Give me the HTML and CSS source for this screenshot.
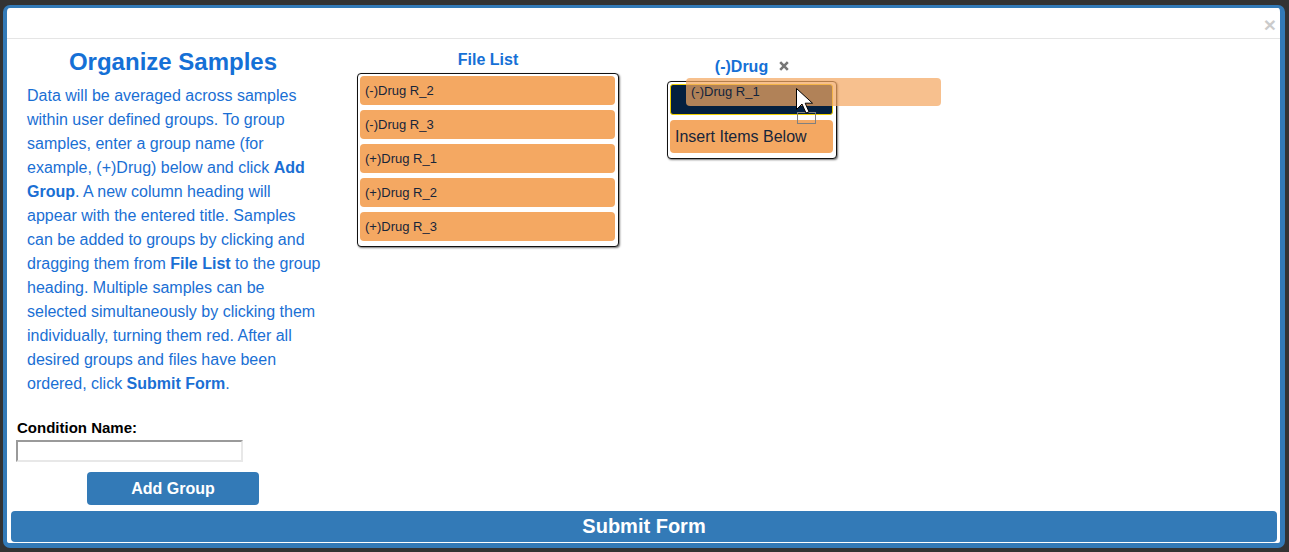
FILE: index.html
```html
<!DOCTYPE html>
<html>
<head>
<meta charset="utf-8">
<link rel="stylesheet" href="styles.css">
</head>
<body>
<div class="modal">
  <div class="modal-header"><span class="close">×</span></div>
  <div class="modal-body">
    <div class="left-col">
      <h2 class="title">Organize Samples</h2>
      <p class="intro">Data will be averaged across samples within user defined groups. To group samples, enter a group name (for example, (+)Drug) below and click <b>Add Group</b>. A new column heading will appear with the entered title. Samples can be added to groups by clicking and dragging them from <b>File List</b> to the group heading. Multiple samples can be selected simultaneously by clicking them individually, turning them red. After all desired groups and files have been ordered, click <b>Submit Form</b>.</p>
      <label class="cond-label">Condition Name:</label>
      <input class="cond-input" type="text">
      <button class="add-btn">Add Group</button>
    </div>
    <div class="file-col">
      <div class="col-head">File List</div>
      <div class="list-box">
        <div class="item">(-)Drug R_2</div>
        <div class="item">(-)Drug R_3</div>
        <div class="item">(+)Drug R_1</div>
        <div class="item">(+)Drug R_2</div>
        <div class="item">(+)Drug R_3</div>
      </div>
    </div>
    <div class="group-col">
      <div class="col-head group-head">(-)Drug <svg class="remove" width="10" height="10" viewBox="0 0 10 10"><path d="M1.2 1.2 L8.8 8.8 M8.8 1.2 L1.2 8.8" stroke="#777" stroke-width="2.6" stroke-linecap="butt"/></svg></div>
      <div class="list-box group-box">
        <div class="placeholder"></div>
        <div class="item big">Insert Items Below</div>
      </div>
    </div>
  </div>
  <button class="submit-btn">Submit Form</button>
</div>
<div class="drag-helper">(-)Drug R_1</div>
<svg class="cursor" width="26" height="40" viewBox="0 0 26 40">
  <rect x="2.5" y="25.5" width="18" height="11" fill="none" stroke="#fff" stroke-width="1"/>
  <rect x="2.5" y="25.5" width="18" height="11" fill="none" stroke="#000" stroke-width="1" stroke-dasharray="1 1"/>
  <path d="M1.5 1.5 L1.5 22.5 L7 17 L11 26 L14 24.8 L10.2 16.2 L17.5 16.2 Z" fill="#fff" stroke="#000" stroke-width="1" stroke-linejoin="miter"/>
</svg>
</body>
</html>
```

FILE: styles.css
```css
html, body {
  margin: 0;
  padding: 0;
}
body {
  background: #333;
  height: 552px;
  overflow: hidden;
  font-family: "Liberation Sans", Arial, sans-serif;
  position: relative;
}
.modal {
  box-sizing: border-box;
  margin: 5px 4px 0 3px;
  height: 543px;
  background: #fff;
  border-style: solid;
  border-color: #337ab7;
  border-width: 3px 5px 5px 4px;
  border-radius: 7px;
  display: flex;
  flex-direction: column;
}
.modal-header {
  height: 30px;
  border-bottom: 1px solid #e5e5e5;
  display: flex;
  justify-content: flex-end;
  align-items: flex-start;
}
.close {
  font-size: 21px;
  font-weight: bold;
  line-height: 21px;
  color: #000;
  opacity: 0.2;
  margin: 6px 4px 0 0;
}
.modal-body {
  display: flex;
  align-items: flex-start;
  padding-left: 9px;
  flex: 1;
}
.left-col {
  width: 314px;
  padding-top: 10px;
  display: flex;
  flex-direction: column;
}
.title {
  margin: 0;
  font-size: 24px;
  line-height: 26px;
  font-weight: bold;
  color: #1570d6;
  text-align: center;
}
.intro {
  margin: 9px 0 0 0;
  padding: 0 8px 0 11px;
  font-size: 16px;
  line-height: 24px;
  color: #1a6fd4;
}
.intro b {
  font-weight: bold;
}
.cond-label {
  margin-top: 24px;
  font-size: 15px;
  line-height: 16px;
  font-weight: bold;
  color: #000;
  padding-left: 1px;
}
.cond-input {
  box-sizing: border-box;
  margin: 4px 0 0 0;
  width: 227px;
  height: 22px;
  border: 2px solid;
  border-color: #9a9a9a #e8e8e8 #e8e8e8 #9a9a9a;
  padding: 0;
  background: #fff;
}
.add-btn {
  align-self: center;
  margin-top: 10px;
  width: 172px;
  height: 33px;
  border: none;
  border-radius: 4px;
  background: #337ab7;
  color: #fff;
  font-family: "Liberation Sans", Arial, sans-serif;
  font-weight: bold;
  font-size: 16px;
  padding: 0;
}
.file-col {
  width: 262px;
  margin-left: 27px;
  padding-top: 11px;
}
.col-head {
  text-align: center;
  font-size: 16px;
  line-height: 20px;
  font-weight: bold;
  color: #1570d6;
  margin-bottom: 3px;
}
.list-box {
  box-sizing: border-box;
  border: 1px solid #111;
  border-radius: 4px;
  box-shadow: 1px 1px 2px rgba(0, 0, 0, 0.55);
  padding: 2px 3px 0 2px;
  background: #fff;
}
.item {
  background: #f4a862;
  border-radius: 4px;
  height: 29px;
  line-height: 29px;
  padding-left: 5px;
  margin-bottom: 5px;
  font-size: 13px;
  color: #17253a;
}
.item.big {
  height: 33px;
  line-height: 33px;
  font-size: 16px;
}
.group-col {
  width: 170px;
  margin-left: 48px;
  padding-top: 18px;
}
.group-head {
  display: flex;
  justify-content: center;
  align-items: center;
  gap: 11px;
  margin-bottom: 4px;
  padding-left: 0;
}
.remove {
  display: block;
  margin-top: -3px;
}
.placeholder {
  box-sizing: border-box;
  height: 31px;
  background: #04203f;
  border: 1px solid #f0d000;
  border-radius: 3px;
  margin-bottom: 5px;
}
.submit-btn {
  margin: 0 3px 1px 4px;
  height: 31px;
  border: none;
  border-radius: 4px;
  background: #337ab7;
  color: #fff;
  font-family: "Liberation Sans", Arial, sans-serif;
  font-weight: bold;
  font-size: 20px;
  padding: 0;
}
.drag-helper {
  position: absolute;
  left: 686px;
  top: 78px;
  width: 250px;
  height: 28px;
  line-height: 28px;
  padding-left: 5px;
  border-radius: 4px;
  background: #f4a862;
  opacity: 0.72;
  font-size: 13px;
  color: #17253a;
}
.cursor {
  position: absolute;
  left: 795px;
  top: 87px;
}
```
